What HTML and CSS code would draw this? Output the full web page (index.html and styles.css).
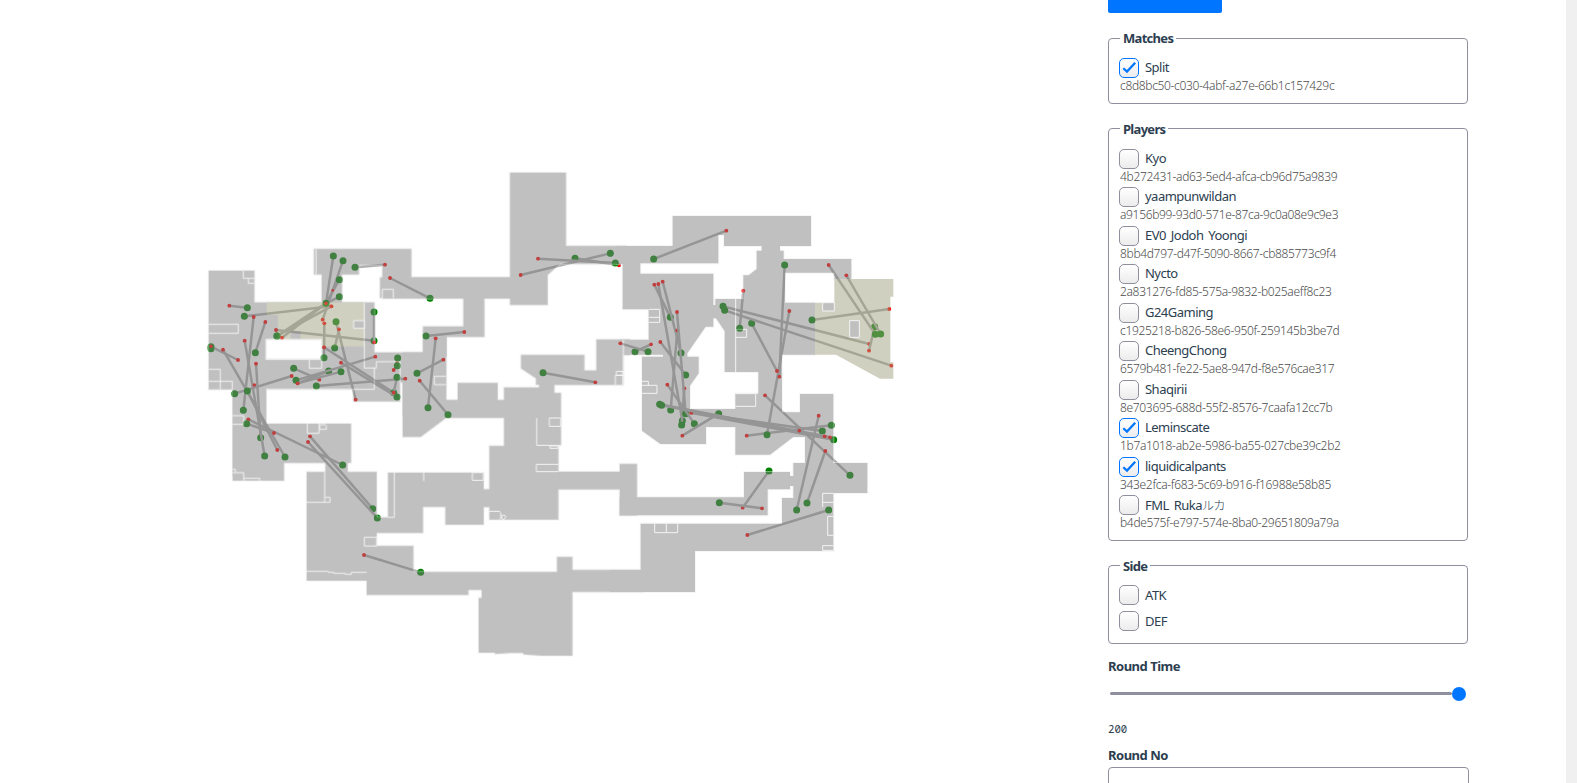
FILE: index.html
```
<!DOCTYPE html>
<html lang="en">
<head>
<meta charset="utf-8">
<title>Match map</title>
<link rel="stylesheet" href="styles.css">
</head>
<body>
<main class="map">
<svg class="map-svg" viewBox="0 0 3324 2349">
<defs>
<marker id="killer" markerUnits="userSpaceOnUse" markerWidth="24" markerHeight="24" refX="12" refY="12"><circle cx="12" cy="12" r="10.5" fill="#008000"/></marker>
<marker id="victim" markerUnits="userSpaceOnUse" markerWidth="14" markerHeight="14" refX="7" refY="7"><circle cx="7" cy="7" r="5.8" fill="#f00"/></marker>
<g id="regions">
<g transform="translate(600 690)">
<path d="M26 122H163V217H365V133H342V57H634V142H940V205H547V105H477V133H426V217H523V367H670V300H740V380H738V560H608V457H600V514H460V478H198V740H98V478H26ZM198 328V388H365V328Z"/>
</g>
<g transform="translate(600 1140)">
<path d="M98 20H198V131H453V249H443V276H530V412H564V278H851V328H880V381H851V434H736V381H669V459H530V498H640V576H1071V531H1117V570H1330V636H1117V827H1025L970 823V819H930L885 822V818H836V654H845V630H805V645H500V602H320V276H376V249H252V302H98Z"/>
</g>
<g transform="translate(1200 480)">
<path d="M-60 352H330V38H498V258H680V312H480L443 345V435H330V414H253V531H138V720H173V669H293V720H312V682H417V674H408V655L363 625V585H553V631H589V538H690V585H670V675H463V699H483V856H475V935H659V912H711V1066H659V988H475V1079H268V1041H240V988H268V858H312V774H138L62 831H8V577H69V499H190V414H-60Z"/>
</g>
<g transform="translate(1860 600)">
<path d="M-10 138H158V48H573V138H480V152H491V177H694V237H643V218H495V308H585V464H486V637H540V582H640V789H742V879H640V1053H225V1176H-30V1110H62V971H486V894H520V858H510V868H443V946H-1V892H372V816H510V828H520V789H555V711H520L450 764H346V681H258V732H121L66 692V470H129V464H0V419H86V328H8V192H-10ZM61 190V221H280V315H286V297H370V226H386L410 207V152H425V138H312V105H295V190ZM280 355V380H257L202 460V470H236V520L210 557V627H346V581H415V516H314V393L288 355Z"/>
</g>
</g>
</defs>

<g class="kills">
<g transform="translate(600 690)">
<path d="M142 233L88 227"/><path d="M133 259L394 229"/><path d="M400 78L378 220"/><path d="M429 92L368 269"/><path d="M418 149L378 220"/><path d="M418 200L378 220"/>
<path d="M231 318L394 229"/><path d="M231 318L378 220"/><path d="M378 220L246 323"/><path d="M465 112L555 104"/><path d="M690 205L570 144"/><path d="M522 332L228 300"/><path d="M522 246L522 337"/>
<path d="M33 356L33 349"/><path d="M33 350L114 390"/><path d="M166 368L196 276"/><path d="M130 541L161 261"/><path d="M408 275L467 509"/><path d="M404 354L417 298"/><path d="M372 383L373 280"/>
<path d="M281 415L358 449"/><path d="M386 423L293 460"/><path d="M288 451L526 380"/><path d="M423 425L293 460"/><path d="M349 468L616 446"/><path d="M104 491L275 438"/>
<path d="M581 488L372 352"/><path d="M591 501L423 398"/><path d="M593 384L591 400"/><path d="M592 407L581 420"/><path d="M591 442L581 488"/>
<path d="M255 681L69 359"/><path d="M182 623L168 401"/><path d="M142 483L232 660"/><path d="M194 678L134 332"/>
<circle cx="163" cy="465" r="5.5"/><circle cx="398" cy="181" r="4"/><circle cx="372" cy="352" r="5.5"/><circle cx="378" cy="220" r="5.5"/><circle cx="33" cy="349" r="5.5"/>
</g>
<g transform="translate(600 1140)">
<path d="M428 255L145 118"/><path d="M140 131L222 159"/><path d="M518 386L330 169"/><path d="M532 414L324 186"/><path d="M662 577L492 525"/>
</g>
<g transform="translate(1200 480)">
<path d="M78 528L193 516"/><path d="M51 640L130 599"/><path d="M84 743L107 535"/><path d="M144 764L59 662"/><path d="M429 638L586 667"/><path d="M525 295L657 316"/><path d="M631 280L362 345"/><path d="M646 309L414 296"/>
</g>
<g transform="translate(1860 600)">
<path d="M45 455L93 433"/><path d="M84 455L1 430"/><path d="M101 177L319 92"/><path d="M151 352L103 254"/><path d="M183 459L128 245"/><path d="M197 525L121 426"/>
<path d="M152 630L172 391"/><path d="M187 662L115 252"/><path d="M185 675L193 565"/><path d="M197 641L171 336"/><path d="M223 671L142 554"/>
<path d="M296 641L187 707"/><path d="M607 693L214 638"/><path d="M641 719L214 638"/><path d="M119 613L630 712"/><path d="M125 616L614 709"/><path d="M634 676L380 707"/><path d="M690 826L435 586"/><path d="M530 930L596 647"/><path d="M561 909L616 753"/><path d="M626 930L382 1005"/><path d="M447 813L368 923"/><path d="M298 908L426 925"/>
<path d="M441 704L508 333"/><path d="M494 195L478 530"/><path d="M395 370L471 513"/><path d="M359 385L370 272"/><path d="M309 319L748 432"/><path d="M314 331L814 497"/><path d="M576 360L808 327"/><path d="M764 380L747 452"/><path d="M766 403L626 195"/><path d="M782 402L679 226"/>
<circle cx="538" cy="692" r="5.5"/>
</g>
</g>

<g class="terrain">
<use href="#regions" class="outline"/>
<use href="#regions" class="ground"/>
<g transform="translate(600 690)">
<path class="site" d="M200 217H493V349H365V328H234V255H200Z"/>
<path class="ground" d="M272 304H302V328H272Z"/>
<path class="ground wall" d="M461 272H493V295H461Z"/>
<path class="wall" d="M130 122V145H163M145 147V160H163M26 283H115V310H26M26 418H61V478M26 454H97V478M328 388V415H365V388M493 218V414H529V395H600V457M523 414V478H198M547 205V178H580V205M738 439H703V464H738M348 57V133M198 328V388H365V328Z"/>
</g>
<g transform="translate(600 1140)">
<path class="wall" d="M98 107H131V133H98M322 131V160H357V131M361 134H376L379 138V148H359V137ZM98 278H131V302M98 268H106V276M131 295H179V302M374 276V367M320 367H390V352H375M583 278V412H564M671 278V303M530 472H493V498H530V472M320 574H385V577H402V580H436V583H454V577H500"/>
</g>
<g transform="translate(1200 480)">
<path class="wall" d="M410 774V856H483M448 774V799H482V774H448M450 858H474V865H450ZM475 913H409V935H475M217 938V961H250V938ZM268 1054H298L302 1058V1074L298 1079M304 1068L308 1066H315L317 1072L313 1078H307ZM670 540V675M649 634H669V646H649ZM646 675V646H668V675"/>
</g>
<g transform="translate(1860 600)">
<path class="site" d="M643 237H820V290H811V487H820V536H780L648 464H585V308H643Z"/>
<path class="ground wall" d="M608 308H643V333H608ZM689 362H718V412H689Z"/>
<path class="wall" d="M87 328H119V367H87M87 352H119M347 297V516M347 388H380V412H347M66 544H85V556M66 556H111V580H66M0 515H10V526H0M346 581H407V619H346M104 971V998H173V971M139 971V998M640 880H608V921M608 907H640M640 949H623V1006H640M640 1037H608V1051H640"/>
</g>
</g>
</svg>
</main>
<aside class="filters">
<div class="button"></div>
<fieldset class="matches">
<legend>Matches</legend>
<div class="row"><i class="box on"><svg viewBox="0 0 18 18"><path d="M3.3 9.2L7 12.6L15.2 3.8"/></svg></i><label>Split</label></div><div class="id">c8d8bc50-c030-4abf-a27e-66b1c157429c</div>
</fieldset>
<fieldset class="players">
<legend>Players</legend>
<div class="row"><i class="box"></i><label>Kyo</label></div><div class="id">4b272431-ad63-5ed4-afca-cb96d75a9839</div>
<div class="row"><i class="box"></i><label>yaampunwildan</label></div><div class="id">a9156b99-93d0-571e-87ca-9c0a08e9c9e3</div>
<div class="row"><i class="box"></i><label>EV0 Jodoh Yoongi</label></div><div class="id">8bb4d797-d47f-5090-8667-cb885773c9f4</div>
<div class="row"><i class="box"></i><label>Nycto</label></div><div class="id">2a831276-fd85-575a-9832-b025aeff8c23</div>
<div class="row"><i class="box"></i><label>G24Gaming</label></div><div class="id">c1925218-b826-58e6-950f-259145b3be7d</div>
<div class="row"><i class="box"></i><label>CheengChong</label></div><div class="id">6579b481-fe22-5ae8-947d-f8e576cae317</div>
<div class="row"><i class="box"></i><label>Shaqirii</label></div><div class="id">8e703695-688d-55f2-8576-7caafa12cc7b</div>
<div class="row"><i class="box on"><svg viewBox="0 0 18 18"><path d="M3.3 9.2L7 12.6L15.2 3.8"/></svg></i><label>Leminscate</label></div><div class="id">1b7a1018-ab2e-5986-ba55-027cbe39c2b2</div>
<div class="row"><i class="box on"><svg viewBox="0 0 18 18"><path d="M3.3 9.2L7 12.6L15.2 3.8"/></svg></i><label>liquidicalpants</label></div><div class="id">343e2fca-f683-5c69-b916-f16988e58b85</div>
<div class="row"><i class="box"></i><label>FML Ruka<span class="jp">ルカ</span></label></div><div class="id">b4de575f-e797-574e-8ba0-29651809a79a</div>
</fieldset>
<fieldset class="side">
<legend>Side</legend>
<div class="row"><i class="box"></i><label>ATK</label></div>
<div class="row"><i class="box"></i><label>DEF</label></div>
</fieldset>
<div class="heading">Round Time</div>
<div class="slider"><span class="track"></span><span class="thumb"></span></div>
<div class="value">200</div>
<div class="heading round-no">Round No</div>
<div class="input"></div>
</aside>
<div class="scrollbar"></div>
</body>
</html>
```
FILE: styles.css
```
* { box-sizing: border-box; }
body {
  margin: 0;
  width: 1577px;
  height: 783px;
  overflow: hidden;
  display: flex;
  background: #fff;
  color: #2c3e50;
  font-family: "Noto Sans", "Noto Sans CJK JP", sans-serif;
  font-size: 13px;
}
.map { flex: 0 0 1108px; height: 783px; }
.map-svg { display: block; width: 1108px; height: 783px; }
.kills path {
  fill: none;
  stroke: #a9a9a9;
  stroke-width: 7.4;
  marker-start: url(#killer);
  marker-end: url(#victim);
}
.kills circle { fill: #f00; }
.terrain { opacity: .5; }
.outline { fill: none; stroke: #ececec; stroke-width: 6; }
.ground { fill: #808080; }
.site { fill: #a0a080; }
.wall { stroke: #e8e8e8; stroke-width: 3; }
.wall:not(.ground) { fill: none; }

.filters { flex: 0 0 361px; height: 783px; overflow: hidden; }
.button { width: 114px; height: 13px; margin-bottom: 15px; background: #0075ff; border-radius: 0 0 2px 2px; }
fieldset {
  width: 360px;
  margin: 0 0 14.5px;
  padding: 10px 10px 6.5px;
  border: 1px solid #8f8f9d;
  border-radius: 4px;
}
legend {
  height: 20px;
  margin-left: 1px;
  padding: 0 3px;
  line-height: 20px;
  font-size: 13px;
  font-weight: 700;
  letter-spacing: -.7px;
}
.row { display: flex; align-items: center; height: 20px; gap: 6px; }
.row label {
  height: 20px;
  line-height: 19px;
  font-size: 13px;
  letter-spacing: -.52px;
  word-spacing: 2px;
  white-space: nowrap;
}
.box {
  display: block;
  width: 20px;
  height: 20px;
  border: 1px solid #8f8f9d;
  border-radius: 5px;
  background: linear-gradient(#fff, #ececec);
}
.box.on { border-color: #0075ff; }
.box svg { display: block; width: 18px; height: 18px; }
.box path { fill: none; stroke: #0075ff; stroke-width: 2.2; }
.id {
  height: 18.5px;
  padding-left: 1px;
  line-height: 16.5px;
  font-size: 12px;
  font-weight: 300;
  letter-spacing: -.33px;
  color: #4c4c4c;
  white-space: nowrap;
}
.jp { font-family: "Noto Sans CJK JP", sans-serif; font-weight: 300; font-size: 12px; letter-spacing: 0; }
.side { margin-bottom: 13px; padding: 9.5px 10px 6px; }
.side .row { height: 20px; margin-bottom: 6px; }
.side label { line-height: 20px; }
.heading { height: 20px; line-height: 19px; font-size: 13px; font-weight: 700; letter-spacing: -.5px; }
.slider { display: flex; align-items: center; height: 14px; margin: 9.5px 3px 0 2px; }
.track { flex: 1; height: 3px; border-radius: 2px; background: #8f8f9d; }
.thumb { width: 14px; height: 14px; border-radius: 50%; background: #0075ff; }
.value { height: 16px; margin-top: 20.5px; line-height: 16px; font-family: "Noto Sans Mono", "DejaVu Sans Mono", "Liberation Mono", monospace; font-size: 10.67px; }
.round-no { margin-top: 8px; line-height: 20px; }
.input { height: 30px; margin-top: 2px; border: 1px solid #8f8f9d; border-radius: 4px; }
.scrollbar { flex: 0 0 11px; margin-left: auto; background: #f0f0f0; }
```
